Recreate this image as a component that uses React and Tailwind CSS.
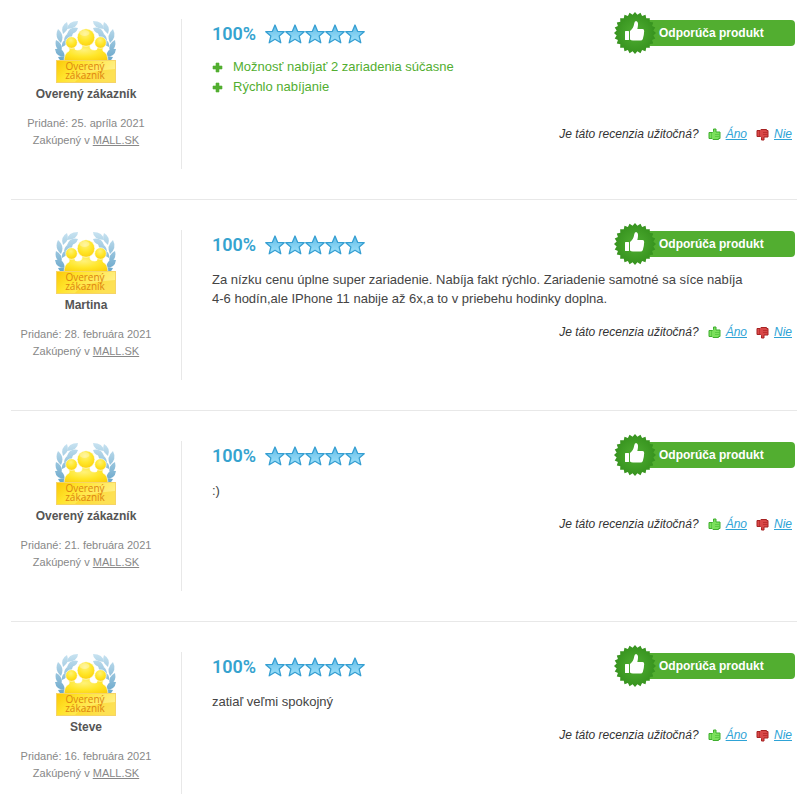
import React from 'react';

const reviews = [
  {
    id: 1,
    author: 'Overený zákazník',
    date: '25. apríla 2021',
    pros: ['Možnosť nabíjať 2 zariadenia súčasne', 'Rýchlo nabíjanie'],
  },
  {
    id: 2,
    author: 'Martina',
    date: '28. februára 2021',
    text: 'Za nízku cenu úplne super zariadenie. Nabíja fakt rýchlo. Zariadenie samotné sa síce nabíja 4-6 hodín,ale IPhone 11 nabije až 6x,a to v priebehu hodinky doplna.',
  },
  {
    id: 3,
    author: 'Overený zákazník',
    date: '21. februára 2021',
    text: ':)',
  },
  {
    id: 4,
    author: 'Steve',
    date: '16. februára 2021',
    text: 'zatiaľ veľmi spokojný',
  },
];

// Gradients shared by all the icons on the page
const Gradients = () => (
  <svg width="0" height="0" className="absolute" aria-hidden="true">
    <defs>
      <linearGradient id="star" x1="0" y1="0" x2="0" y2="1">
        <stop offset="0" stopColor="#62bce8" />
        <stop offset="1" stopColor="#a0e2fa" />
      </linearGradient>
      <radialGradient id="seal">
        <stop offset="0" stopColor="#4fae32" />
        <stop offset="1" stopColor="#36921e" />
      </radialGradient>
      <radialGradient id="person" cx="0.45" cy="0.3" r="0.8">
        <stop offset="0" stopColor="#fff27a" />
        <stop offset="0.5" stopColor="#ffe628" />
        <stop offset="1" stopColor="#fbcb08" />
      </radialGradient>
      <linearGradient id="plate" x1="0" y1="0" x2="1" y2="0.4">
        <stop offset="0" stopColor="#fbc707" />
        <stop offset="0.35" stopColor="#ffe32a" />
        <stop offset="1" stopColor="#fff08a" />
      </linearGradient>
      <linearGradient id="leaf" x1="0" y1="0" x2="0" y2="42" gradientUnits="userSpaceOnUse">
        <stop offset="0" stopColor="#cde6f3" />
        <stop offset="1" stopColor="#68a6ca" />
      </linearGradient>
    </defs>
  </svg>
);

const leaves = (
  <g fill="url(#leaf)">
    <path d="M12 10 Q13 2 23 2 Q23 9 12 10Z" />
    <path d="M12 15 Q15 7 23 9 Q21 16 12 15Z" />
    <path d="M8 15 Q5 7 12 3 Q15 10 8 15Z" />
    <path d="M9 21 Q10 13 18 14 Q17 21 9 21Z" />
    <path d="M6 24 Q-1 18 3 10 Q10 16 6 24Z" />
    <path d="M6 33 Q-1 29 1 21 Q9 25 6 33Z" />
    <path d="M7 28 Q6 22 12 20 Q13 26 7 28Z" />
    <path d="M10 38 Q1 38 0 30 Q9 28 10 38Z" />
    <path d="M13 43 Q6 45 3 38 Q11 36 13 43Z" />
  </g>
);

const CustomerBadge = () => (
  <svg viewBox="0 0 62 64" className="block w-[62px] h-[64px]" role="img" aria-label="Overený zákazník">
    {leaves}
    <g transform="translate(61 0) scale(-1 1)">{leaves}</g>
    {/* body with a white outline, the heads drawn over it */}
    <g fill="url(#person)" stroke="#fff" strokeWidth="0.6">
      <path d="M9 43 Q9 34 14 32 Q15 30 13 28 H20 Q19 31 22 31 Q28 31 27 26 H35 Q34 31 40 31 Q43 31 42 28 H49 Q47 30 48 32 Q53 34 53 43Z" />
      <circle cx="16.500" cy="23.500" r="5.800" />
      <circle cx="45.500" cy="23.500" r="5.800" />
      <circle cx="31" cy="18.500" r="8.800" />
    </g>
    <ellipse cx="29.500" cy="14" rx="5" ry="3" fill="#fff" opacity="0.3" />
    <rect x="1.500" y="41.500" width="59" height="22" fill="url(#plate)" stroke="#f6d466" />
    <path d="M2 63 L20 63 Q28 52 60 50 L60 63Z" fill="#fbcf12" opacity="0.45" />
    <g fill="#dd8410" textAnchor="middle" className="font-['Open_Sans',sans-serif] text-[10px] font-medium">
      <text x="30" y="51">Overený</text>
      <text x="30" y="60">zákazník</text>
    </g>
  </svg>
);

const Stars = () => (
  <div className="flex" role="img" aria-label="5 z 5 hviezdičiek">
    {[1, 2, 3, 4, 5].map((n) => (
      <svg key={n} viewBox="0 0 20 20" className="w-5 h-5">
        <path
          d="M10 1 L12.600 7.300 L19.200 7.700 L14.200 12.100 L15.800 18.800 L10 15.300 L4.200 18.800 L5.800 12.100 L0.800 7.700 L7.400 7.300Z"
          fill="url(#star)"
          stroke="#369fd2"
          strokeWidth="1.300"
          strokeLinejoin="round"
        />
      </svg>
    ))}
  </div>
);

// Round seal with 24 teeth
const sealPoints = Array.from({ length: 48 }, (_, i) => {
  const r = i % 2 === 0 ? 21 : 18.5;
  const a = (i * Math.PI) / 24;
  return `${(21 + r * Math.cos(a)).toFixed(2)},${(21 + r * Math.sin(a)).toFixed(2)}`;
}).join(' ');

const Recommended = () => (
  <div className="relative flex items-center w-[161px] h-[26px] pl-[25px] rounded-r bg-[#52ae30] text-white text-xs font-bold">
    <svg viewBox="0 0 42 42" className="absolute -left-5 -top-2 w-[42px] h-[42px]" aria-hidden="true">
      <polygon points={sealPoints} fill="url(#seal)" />
      <rect x="11" y="19" width="4" height="9" rx="0.500" fill="#fff" />
      <path
        d="M16 19 Q19.500 16.500 20.200 11.500 Q20.500 9 22 9 Q24.300 9.500 24 13 Q23.800 15.500 23.300 17 H28.500 Q30.300 17.200 30.200 19 Q30 23.500 28.800 27 Q28.300 28.500 26.500 28.500 H19 Q17 28.300 16 27.500Z"
        fill="#fff"
      />
    </svg>
    Odporúča produkt
  </div>
);

const Thumb = ({ down }) => (
  <svg viewBox="0 0 13 13" className="w-[13px] h-[13px]" aria-hidden="true">
    <g transform={down ? 'translate(0 13) scale(1 -1)' : undefined}>
      <path
        d="M1 4.500 H4.500 L5.500 3.500 V1 H8 V4 H12 V10.500 H10.500 V11.500 H5 L4 10.500 H1Z"
        fill={down ? '#d84848' : '#7be05c'}
        stroke={down ? '#a62323' : '#3fae2e'}
      />
      <path d="M3.500 5 V10 M7 6.500 H11.500 M7 8.500 H11.500" fill="none" stroke={down ? '#b32626' : '#4fbf3a'} strokeWidth="0.700" />
    </g>
  </svg>
);

const Usefulness = () => (
  <div className="flex items-center justify-end h-5 pr-[5px] text-xs italic">
    <span className="text-[#333]">Je táto recenzia užitočná?</span>
    <span className="flex items-center gap-[5px] ml-[9px]">
      <Thumb />
      <a href="#ano" className="text-[#2ea3d6] underline">Áno</a>
    </span>
    <span className="flex items-center gap-[5px] ml-[9px]">
      <Thumb down />
      <a href="#nie" className="text-[#2ea3d6] underline">Nie</a>
    </span>
  </div>
);

const Review = ({ review }) => (
  <article className="flex pb-[30px] mb-[30px] border-b border-[#e8e8e8] last:pb-0 last:mb-0 last:border-b-0">
    <div className="flex flex-col items-center shrink-0 w-[171px] min-h-[150px] pr-5 border-r border-[#e8e8e8] text-center">
      <CustomerBadge />
      <h3 className="text-xs leading-[22px] font-bold text-[#555]">{review.author}</h3>
      <div className="mt-[10px] text-[11px] leading-[17px] text-[#888]">
        <p>Pridané: {review.date}</p>
        <p>
          Zakúpený v <a href="#mall" className="underline">MALL.SK</a>
        </p>
      </div>
    </div>

    <div className="grow min-w-0 pl-[30px]">
      <div className="flex items-center justify-between h-7 pr-[2px]">
        <div className="flex items-center pt-[2px]">
          <span className="w-[53px] font-[Roboto,sans-serif] text-lg font-semibold text-[#36a3cf]">100%</span>
          <Stars />
        </div>
        <Recommended />
      </div>

      {review.pros && (
        <ul className="mt-[10px] mb-[27px] text-[13px] leading-5 text-[#52ae30]">
          {review.pros.map((item) => (
            <li key={item} className="flex items-center">
              <svg viewBox="0 0 11 11" className="w-[11px] h-[11px] mr-[10px]" aria-hidden="true">
                <path d="M4 1h3v3h3v3H7v3H4V7H1V4h3z" fill="#52ae30" stroke="#52ae30" strokeWidth="0.600" strokeLinejoin="round" />
              </svg>
              {item}
            </li>
          ))}
        </ul>
      )}

      {review.text && (
        <p className="mt-3 mb-[14px] mr-10 text-[13px] leading-[19px] text-[#444]">{review.text}</p>
      )}

      <Usefulness />
    </div>
  </article>
);

export default function App() {
  return (
    <main className="min-h-screen bg-white pt-[19px] pl-[11px] pr-3 font-['Liberation_Sans',Arial,sans-serif]">
      <Gradients />
      {reviews.map((review) => (
        <Review key={review.id} review={review} />
      ))}
    </main>
  );
}
